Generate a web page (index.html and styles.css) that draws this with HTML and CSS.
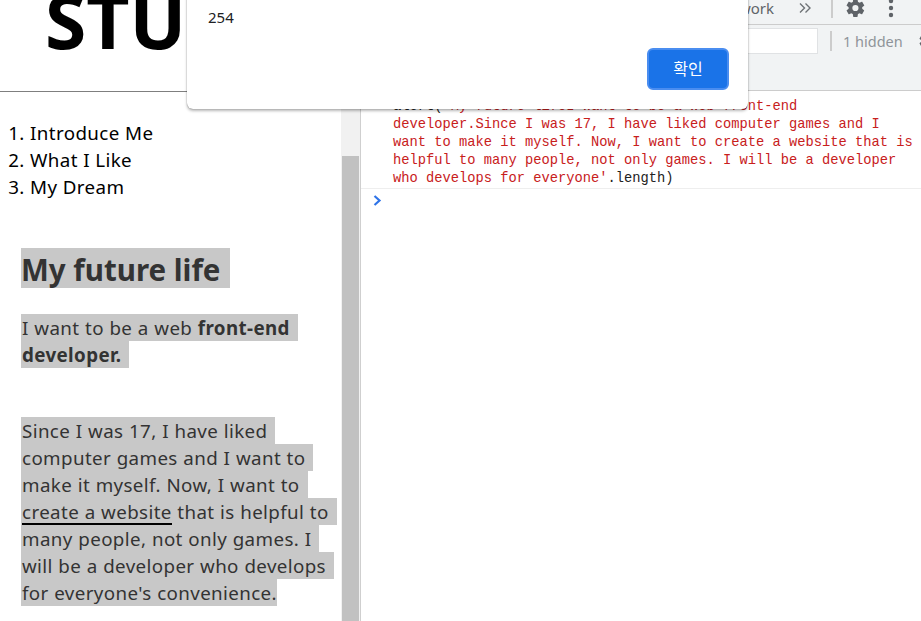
FILE: index.html
```html
<!DOCTYPE html>
<html lang="ko">
<head>
<meta charset="utf-8">
<title>My future life</title>
<link rel="stylesheet" href="styles.css">
</head>
<body>
<div class="page">
  <section class="site">
    <header class="site-head"><h1 class="logo">STU</h1></header>
    <div class="site-body">
      <main class="site-main">
        <ol class="nav">
          <li>Introduce Me</li>
          <li>What I Like</li>
          <li>My Dream</li>
        </ol>
        <article class="story">
          <h2 class="story-title"><span class="mark">My future life</span></h2>
          <p class="story-lead">
            <span class="mark line">I want to be a web <b>front-end</b></span>
            <span class="mark line"><b>developer.</b></span>
          </p>
          <p class="story-text">
            <span class="mark line">Since I was 17, I have liked</span>
            <span class="mark line">computer games and I want to</span>
            <span class="mark line">make it myself. Now, I want to</span>
            <span class="mark line"><u class="link">create a website</u> that is helpful to</span>
            <span class="mark line">many people, not only games. I</span>
            <span class="mark line">will be a developer who develops</span>
            <span class="mark line last">for everyone's convenience.</span>
          </p>
        </article>
      </main>
      <div class="scrollbar"><div class="thumb"></div></div>
    </div>
  </section>

  <section class="devtools">
    <div class="tabs">
      <span class="tab">Network</span>
      <svg class="more" width="14" height="12" viewBox="0 0 14 12"><path d="M2 1.5 6.5 6 2 10.500M7.500 1.500 12 6 7.500 10.500" fill="none" stroke="#6e7276" stroke-width="1.400"/></svg>
      <span class="sep"></span>
      <svg class="gear" width="20" height="20" viewBox="0 0 24 24"><path fill="#5f6368" fill-rule="evenodd" d="M19.400 13c.1-.3.100-.7.100-1s0-.7-.1-1l2.300-1.700c.2-.2.300-.5.100-.7l-2.200-3.800c-.1-.2-.4-.3-.7-.2l-2.700 1.100c-.6-.4-1.200-.8-1.800-1L13.900 1.800c0-.3-.2-.5-.5-.5H9.100c-.3 0-.5.200-.5.500L8.200 4.700c-.6.200-1.200.6-1.800 1L3.700 4.600c-.3-.1-.6 0-.7.200L.8 8.600c-.2.200-.1.500.1.700L3.200 11c-.1.300-.1.700-.1 1s0 .7.100 1L.9 14.700c-.2.200-.3.500-.1.700L3 19.200c.1.200.4.300.7.200l2.700-1.100c.6.400 1.200.8 1.800 1l.4 2.900c0 .3.200.5.500.5h4.300c.3 0 .5-.2.500-.5l.4-2.900c.6-.2 1.200-.6 1.800-1l2.700 1.100c.3.100.6 0 .7-.2l2.200-3.800c.1-.2.100-.5-.1-.7zM11.300 15.700a3.700 3.700 0 1 1 0-7.400 3.700 3.700 0 0 1 0 7.400z"/></svg>
      <svg class="kebab" width="6" height="20" viewBox="0 0 6 20"><circle cx="3" cy="3" r="2.200" fill="#5f6368"/><circle cx="3" cy="10" r="2.200" fill="#5f6368"/><circle cx="3" cy="17" r="2.200" fill="#5f6368"/></svg>
    </div>
    <div class="filters">
      <div class="filter-input"></div>
      <span class="sep sep-filter"></span>
      <span class="hidden-count">1 hidden</span>
      <svg class="gear-small" width="18" height="18" viewBox="0 0 24 24"><path fill="#5f6368" fill-rule="evenodd" d="M19.400 13c.1-.3.100-.7.100-1s0-.7-.1-1l2.300-1.700c.2-.2.300-.5.100-.7l-2.200-3.800c-.1-.2-.4-.3-.7-.2l-2.700 1.100c-.6-.4-1.200-.8-1.800-1L13.900 1.800c0-.3-.2-.5-.5-.5H9.100c-.3 0-.5.200-.5.500L8.200 4.700c-.6.200-1.200.6-1.800 1L3.700 4.600c-.3-.1-.6 0-.7.200L.8 8.600c-.2.200-.1.500.1.700L3.200 11c-.1.300-.1.700-.1 1s0 .7.100 1L.9 14.700c-.2.200-.3.500-.1.700L3 19.200c.1.200.4.300.7.200l2.700-1.100c.6.400 1.200.8 1.800 1l.4 2.900c0 .3.200.5.500.5h4.300c.3 0 .5-.2.500-.5l.4-2.900c.6-.2 1.200-.6 1.800-1l2.700 1.100c.3.100.6 0 .7-.2l2.200-3.800c.1-.2.100-.5-.1-.7zM11.300 15.700a3.700 3.700 0 1 1 0-7.400 3.700 3.700 0 0 1 0 7.400z"/></svg>
    </div>
    <div class="console">
      <div class="entry">
        <span class="caret">›</span>
        <code class="code">alert(<span class="str">'My future lifeI want to be a web front-end
developer.Since I was 17, I have liked computer games and I
want to make it myself. Now, I want to create a website that is
helpful to many people, not only games. I will be a developer
who develops for everyone'</span>.length)</code>
      </div>
      <div class="prompt">
        <svg width="9" height="11" viewBox="0 0 9 11"><path d="M1.500 1 6.500 5.500 1.500 10" fill="none" stroke="#2f74e8" stroke-width="2.200"/></svg>
      </div>
    </div>
  </section>

  <div class="dialog" role="alertdialog">
    <p class="dialog-msg">254</p>
    <div class="dialog-actions"><button class="dialog-ok" type="button">확인</button></div>
  </div>
</div>
</body>
</html>
```
FILE: styles.css
```css
* { box-sizing: border-box; }
html, body { margin: 0; height: 100%; overflow: hidden; background: #fff; }
body { font-family: "Noto Sans", "Noto Sans CJK KR", sans-serif; color: #000; }

.page { position: relative; display: flex; width: 921px; height: 621px; overflow: hidden; }

/* left: the web page */
.site { width: 360px; flex: none; display: flex; flex-direction: column; }
.site-head { height: 92px; flex: none; border-bottom: 1px solid #7f7f7f; padding-left: 45px; display: flex; align-items: flex-end; overflow: hidden; }
.logo { margin: 0 0 31px; font-size: 75px; line-height: 80px; font-weight: 700; letter-spacing: 0; }
.site-body { flex: 1; display: flex; min-height: 0; }
.site-main { flex: 1; min-width: 0; }
.scrollbar { width: 19px; flex: none; background: #f1f1f1; padding: 64px 1px 0 1px; display: flex; }
.thumb { flex: 1; background: #c1c1c1; }

.nav { margin: 27px 0 0; padding: 0 0 0 30px; font-size: 18.750px; line-height: 27px; letter-spacing: .4px; }

.story { padding-left: 21px; color: #333; }
.story-title { margin: 48px 0 0; font-size: 29.500px; line-height: 44px; font-weight: 700; }
.story-title .mark { display: block; width: 209px; height: 40px; }
.story-lead { margin: 26px 0 0; }
.story-text { margin: 49px 0 0; }
.mark { background: #c8c8c8; }
.line { display: block; width: fit-content; height: 27px; font-size: 18.750px; line-height: 28px; padding-right: 8px; letter-spacing: .38px; word-spacing: .3px; text-indent: 1px; }
.line.last { padding-right: 0; }
.line b { font-weight: 700; }
.link { color: inherit; text-decoration: none; border-bottom: 2.500px solid #000; display: inline-block; line-height: 24px; height: 24.500px; text-indent: 0; }

/* right: devtools */
.devtools { flex: 1; min-width: 0; border-left: 1px solid #cfcfcf; display: flex; flex-direction: column; }
.tabs { height: 25px; flex: none; background: #f1f3f4; border-bottom: 1px solid #ccc; display: flex; align-items: center; justify-content: flex-end; padding: 0 27px 9px 0; font-size: 15px; color: #5f6368; position: relative; }
.tab { margin-right: 24px; }
.more { margin-right: 19px; }
.sep { width: 2px; height: 20px; background: #ccc; display: block; flex: none; }
.gear { margin: 0 0 0 13px; }
.kebab { margin-left: 22px; }
.filters { height: 66px; flex: none; background: #f1f3f4; border-bottom: 1px solid #ccc; display: flex; align-items: flex-start; padding-top: 3px; font-size: 14.500px; color: #8f9499; }
.filter-input { width: 457px; height: 26px; background: #fff; border: 1px solid #e0e2e4; flex: none; }
.sep-filter { margin: 3px 0 0 12px; }
.hidden-count { margin-left: 11px; line-height: 26px; white-space: nowrap; flex: none; }
.gear-small { margin: 4px 0 0 16px; flex: none; }

.console { flex: 1; background: #fff; }
.entry { position: relative; padding: 7px 0 3px 32px; border-bottom: 1px solid #eee; height: 98px; }
.caret { position: absolute; left: 12px; top: 3px; color: #777; font-size: 14px; line-height: 18px; }
.code { display: block; white-space: pre; font-family: "Liberation Mono", monospace; font-size: 13.750px; line-height: 18px; color: #222; }
.str { color: #c8201c; }
.prompt { padding: 6px 0 0 12px; line-height: 0; }

/* native alert */
.dialog { position: absolute; left: 187px; top: -10px; width: 561px; height: 119px; background: #fff; border-radius: 0 0 6px 6px; box-shadow: 0 2px 3px rgba(0,0,0,.28), 0 0 1px rgba(0,0,0,.5); padding: 0 19px 19px 21px; display: flex; flex-direction: column; justify-content: flex-end; }
.dialog-msg { margin: 0 0 19px; font-size: 15px; line-height: 24px; color: #202124; }
.dialog-actions { display: flex; justify-content: flex-end; }
.dialog-ok { width: 82px; height: 42px; background: #1a73e8; border: 2px solid #4a8df0; border-radius: 6px; color: #fff; font: 16px "Noto Sans CJK KR", sans-serif; padding: 0 0 3px; }
```
